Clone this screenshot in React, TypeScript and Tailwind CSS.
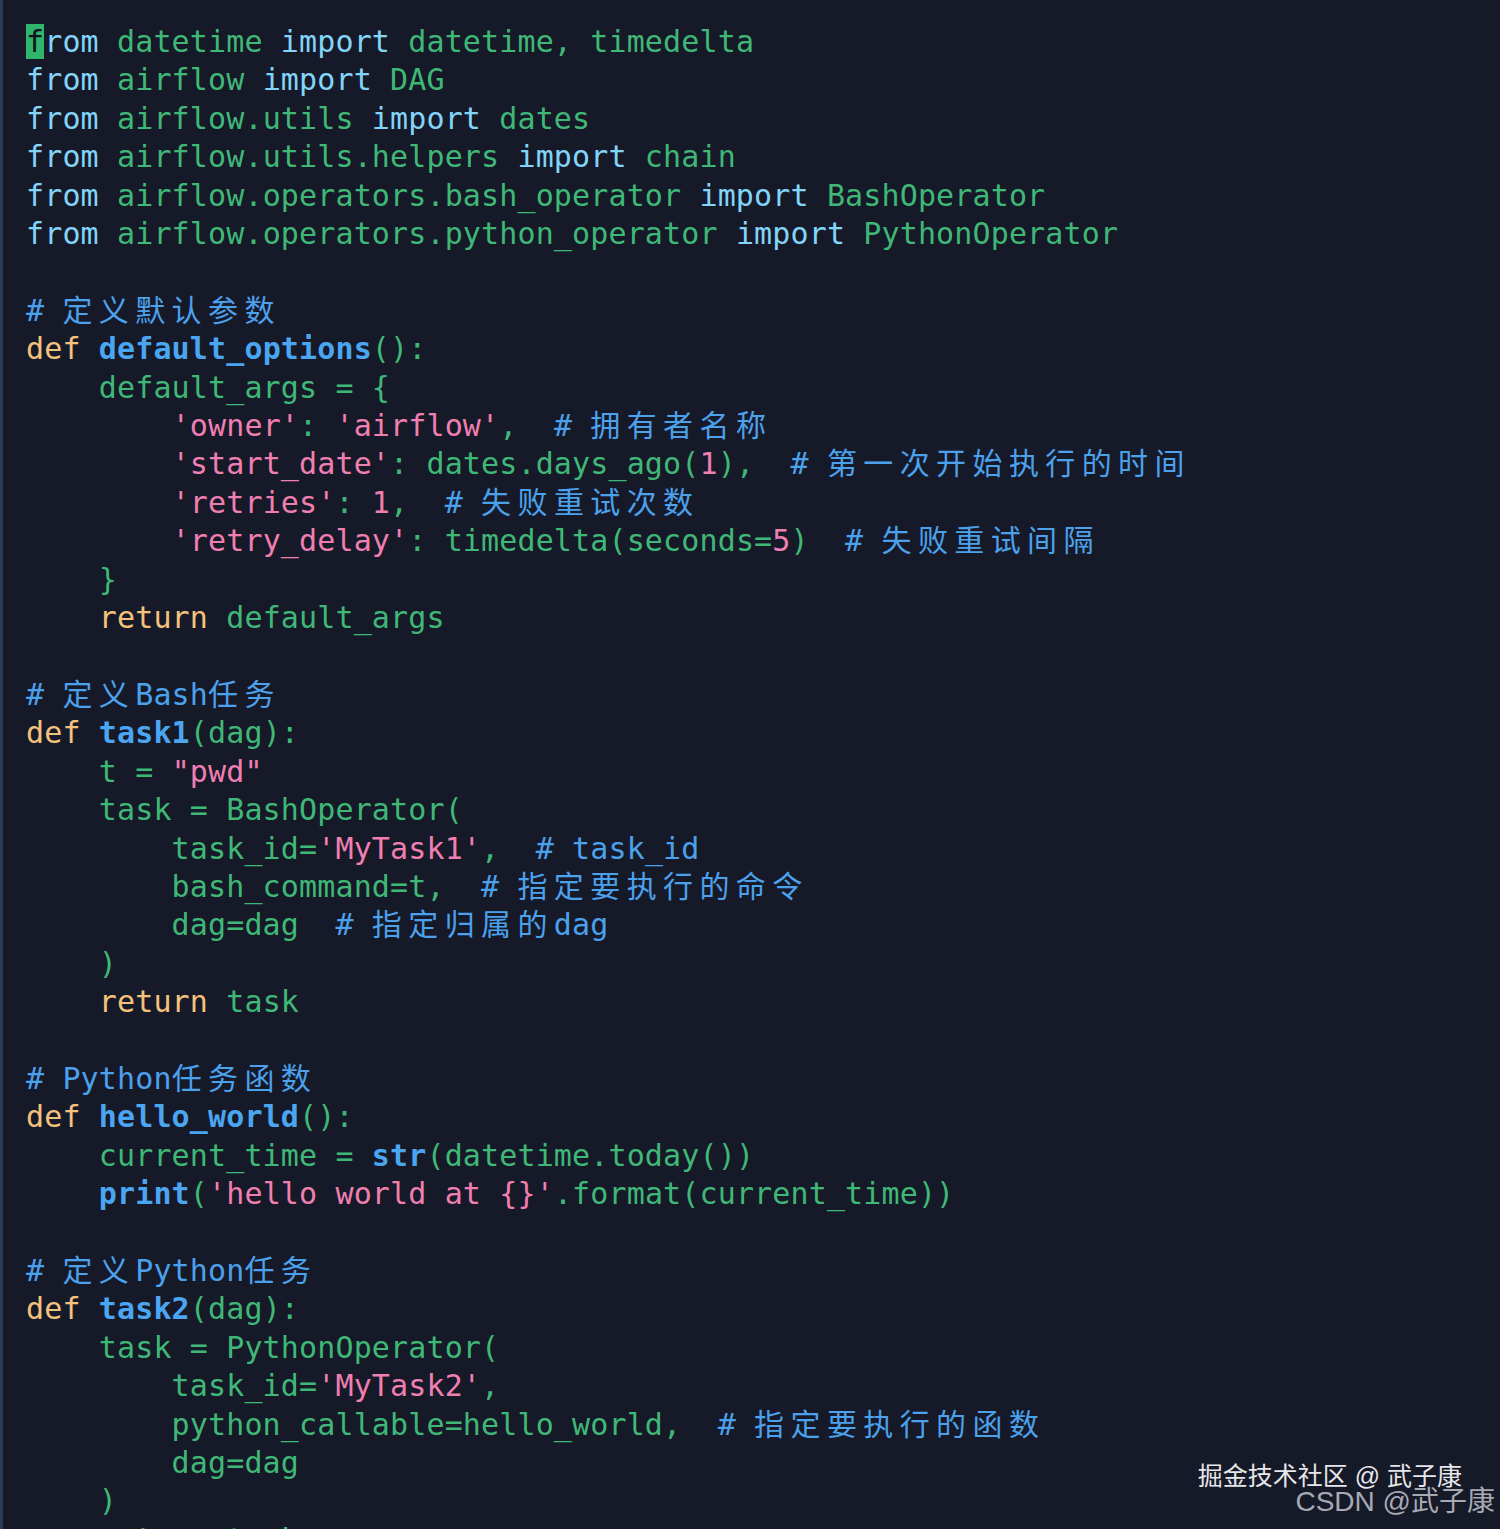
import React from "react";

type Tok = [string, string];

const C: Record<string, string> = {
  k: "text-[#82d5f8]",
  m: "text-[#3fb877]",
  d: "text-[#f4c27d]",
  f: "font-bold text-[#4ba6f2]",
  c: "text-[#4ba1ec]",
  s: "text-[#ef7fb0]",
};

// one entry per line, tokens as [text, colour key]
const LINES: Tok[][] = [
  [["from", "k"], [" datetime ", "m"], ["import", "k"], [" datetime, timedelta", "m"]],
  [["from", "k"], [" airflow ", "m"], ["import", "k"], [" DAG", "m"]],
  [["from", "k"], [" airflow.utils ", "m"], ["import", "k"], [" dates", "m"]],
  [["from", "k"], [" airflow.utils.helpers ", "m"], ["import", "k"], [" chain", "m"]],
  [["from", "k"], [" airflow.operators.bash_operator ", "m"], ["import", "k"], [" BashOperator", "m"]],
  [["from", "k"], [" airflow.operators.python_operator ", "m"], ["import", "k"], [" PythonOperator", "m"]],
  [],
  [["# 定义默认参数", "c"]],
  [["def ", "d"], ["default_options", "f"], ["():", "m"]],
  [["    default_args = {", "m"]],
  [["        ", "m"], ["'owner'", "s"], [": ", "m"], ["'airflow'", "s"], [",  ", "m"], ["# 拥有者名称", "c"]],
  [["        ", "m"], ["'start_date'", "s"], [": dates.days_ago(", "m"], ["1", "s"], ["),  ", "m"], ["# 第一次开始执行的时间", "c"]],
  [["        ", "m"], ["'retries'", "s"], [": ", "m"], ["1", "s"], [",  ", "m"], ["# 失败重试次数", "c"]],
  [["        ", "m"], ["'retry_delay'", "s"], [": timedelta(seconds=", "m"], ["5", "s"], [")  ", "m"], ["# 失败重试间隔", "c"]],
  [["    }", "m"]],
  [["    ", "m"], ["return", "d"], [" default_args", "m"]],
  [],
  [["# 定义Bash任务", "c"]],
  [["def ", "d"], ["task1", "f"], ["(dag):", "m"]],
  [["    t = ", "m"], ['"pwd"', "s"]],
  [["    task = BashOperator(", "m"]],
  [["        task_id=", "m"], ["'MyTask1'", "s"], [",  ", "m"], ["# task_id", "c"]],
  [["        bash_command=t,  ", "m"], ["# 指定要执行的命令", "c"]],
  [["        dag=dag  ", "m"], ["# 指定归属的dag", "c"]],
  [["    )", "m"]],
  [["    ", "m"], ["return", "d"], [" task", "m"]],
  [],
  [["# Python任务函数", "c"]],
  [["def ", "d"], ["hello_world", "f"], ["():", "m"]],
  [["    current_time = ", "m"], ["str", "f"], ["(datetime.today())", "m"]],
  [["    ", "m"], ["print", "f"], ["(", "m"], ["'hello world at {}'", "s"], [".format(current_time))", "m"]],
  [],
  [["# 定义Python任务", "c"]],
  [["def ", "d"], ["task2", "f"], ["(dag):", "m"]],
  [["    task = PythonOperator(", "m"]],
  [["        task_id=", "m"], ["'MyTask2'", "s"], [",", "m"]],
  [["        python_callable=hello_world,  ", "m"], ["# 指定要执行的函数", "c"]],
  [["        dag=dag", "m"]],
  [["    )", "m"]],
  [["    ", "m"], ["return", "d"], [" task", "m"]],
];

// CJK glyphs get padded out to two monospace cells
const Chunk = ({ text }: { text: string }) => {
  const parts = text.split(/([\u4e00-\u9fff]+)/);
  return (
    <>
      {parts.map((p, i) =>
        /[\u4e00-\u9fff]/.test(p) ? (
          <span key={i} className="tracking-[6.4px]">
            {p}
          </span>
        ) : (
          <React.Fragment key={i}>{p}</React.Fragment>
        )
      )}
    </>
  );
};

const CodeLine = ({ toks, first }: { toks: Tok[]; first: boolean }) => (
  <div className="h-[38.42px] whitespace-pre">
    {toks.map(([t, k], i) => {
      if (first && i === 0) {
        return (
          <span key={i} className={C[k]}>
            <span className="bg-[#2fb56c] text-[#10141c]">{t[0]}</span>
            {t.slice(1)}
          </span>
        );
      }
      return (
        <span key={i} className={C[k]}>
          <Chunk text={t} />
        </span>
      );
    })}
  </div>
);

export default function App() {
  return (
    <div className="relative w-[1500px] h-[1529px] overflow-hidden bg-[#161927] border-l-[3px] border-[#2a3b57] flex flex-col">
      <div className="flex h-[2px] w-full">
        <div className="w-[480px]" />
        <div className="w-[380px] bg-[#1d3a3e]" />
        <div className="w-[100px]" />
        <div className="w-[325px] bg-[#2c2f3c]" />
      </div>
      <div
        className="pl-[23px] pt-[23px] text-[30px] tracking-[0.14px] leading-[38.42px]"
        style={{ fontFamily: '"DejaVu Sans Mono", "Noto Sans CJK SC", monospace' }}
      >
        {LINES.map((l, i) => (
          <CodeLine key={i} toks={l} first={i === 0} />
        ))}
      </div>
      <div
        className="absolute right-[38px] top-[1461px] text-[25px] leading-[30px] text-[#e6e7ea]"
        style={{ fontFamily: '"Liberation Sans", "Noto Sans CJK SC", sans-serif' }}
      >
        掘金技术社区 @ 武子康
      </div>
      <div
        className="absolute right-[5px] top-[1485px] text-[28px] leading-[34px] text-[#a7aab3]"
        style={{ fontFamily: '"Liberation Sans", "Noto Sans CJK SC", sans-serif' }}
      >
        CSDN @武子康
      </div>
    </div>
  );
}
